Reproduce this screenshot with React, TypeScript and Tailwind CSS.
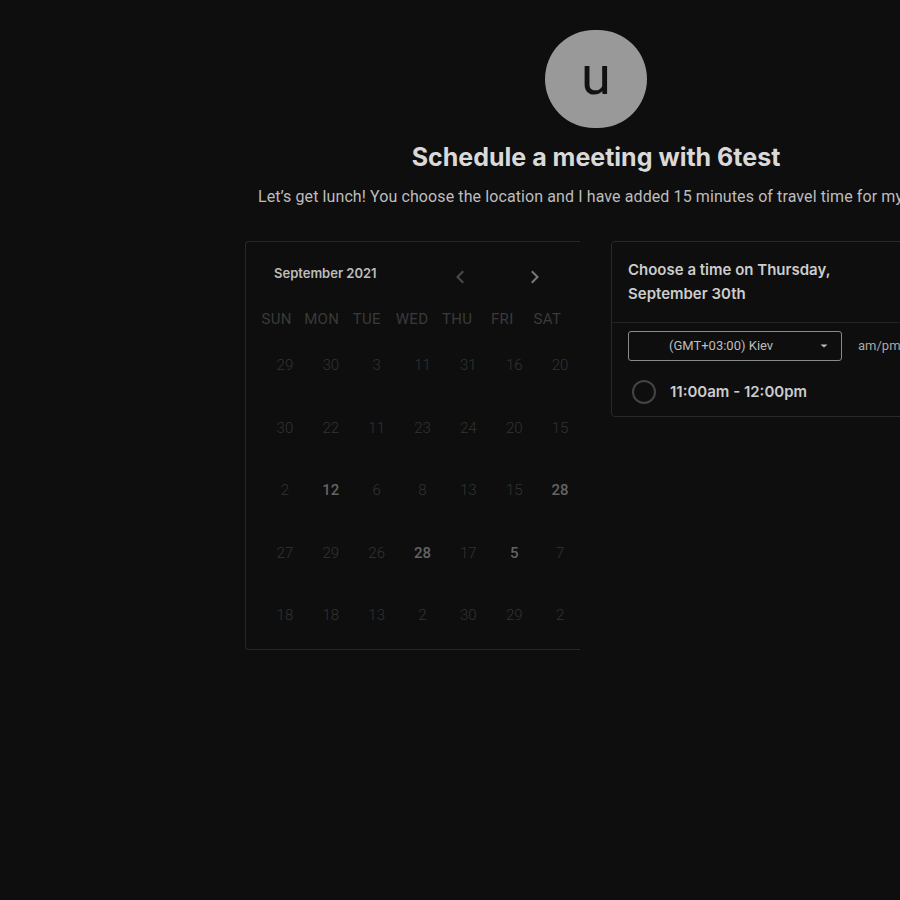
import React from "react";

const weekdays = ["SUN", "MON", "TUE", "WED", "THU", "FRI", "SAT"];
const rows: { v: string; b?: boolean }[][] = [
  [{ v: "29" }, { v: "30" }, { v: "3" }, { v: "11" }, { v: "31" }, { v: "16" }, { v: "20" }],
  [{ v: "30" }, { v: "22" }, { v: "11" }, { v: "23" }, { v: "24" }, { v: "20" }, { v: "15" }],
  [{ v: "2" }, { v: "12", b: true }, { v: "6" }, { v: "8" }, { v: "13" }, { v: "15" }, { v: "28", b: true }],
  [{ v: "27" }, { v: "29" }, { v: "26" }, { v: "28", b: true }, { v: "17" }, { v: "5", b: true }, { v: "7" }],
  [{ v: "18" }, { v: "18" }, { v: "13" }, { v: "2" }, { v: "30" }, { v: "29" }, { v: "2" }],
];

function Chevron({ dir, color }: { dir: "l" | "r"; color: string }) {
  return (
    <svg width="20" height="20" viewBox="0 0 20 20" fill="none">
      <path
        d={dir === "l" ? "M12.5 5 L7.5 10 L12.5 15" : "M7.5 5 L12.5 10 L7.5 15"}
        stroke={color}
        strokeWidth="2"
        strokeLinecap="square"
      />
    </svg>
  );
}

export default function App() {
  return (
    <div className="w-[900px] h-[900px] overflow-hidden bg-[#0e0e0e]">
      <div className="w-[1192px] flex flex-col items-center pt-[30px]">
        <div className="w-[102px] h-[98px] rounded-full bg-[#999999] flex items-center justify-center">
          <span
            className="text-[54px] font-normal text-[#111111] leading-none -mt-[6px]"
            style={{ fontFamily: "Roboto, sans-serif" }}
          >
            u
          </span>
        </div>
        <h1
          className="mt-[14px] text-[25px] leading-[30px] font-bold text-[#d9d9d9]"
          style={{ fontFamily: "Inter, sans-serif" }}
        >
          Schedule a meeting with 6test
        </h1>
        <p
          className="mt-[15px] text-[16px] leading-[20px] tracking-[0.1px] text-[#bdbdbd] whitespace-nowrap"
          style={{ fontFamily: "Roboto, sans-serif" }}
        >
          Let’s get lunch! You choose the location and I have added 15 minutes of travel time for myself.
        </p>

        <div className="mt-[34px] flex gap-[31px] items-start">
          {/* Calendar */}
          <div className="w-[335px] h-[409px] border-l border-t border-b border-[#272727] rounded-l-sm flex">
            <div className="flex-1 flex flex-col">
              <div className="pt-[20px] h-[44px] flex items-center pl-[28px] pr-[38px]">
                <span
                  className="text-[13px] font-semibold text-[#bdbdbd]"
                  style={{ fontFamily: "Inter, sans-serif" }}
                >
                  September 2021
                </span>
                <div className="ml-auto flex items-center gap-[55px] mt-[6px]">
                  <Chevron dir="l" color="#4a4a4a" />
                  <Chevron dir="r" color="#7a7a7a" />
                </div>
              </div>
              <div
                className="mt-[22px] ml-[8px] w-[316px] grid grid-cols-7 h-[20px] items-center"
                style={{ fontFamily: "Roboto, sans-serif" }}
              >
                {weekdays.map((w) => (
                  <div key={w} className="text-center text-[15px] tracking-[0.3px] text-[#3a3a3a]">
                    {w}
                  </div>
                ))}
              </div>
              <div
                className="mt-[6px] ml-[16px] w-[321px] flex flex-col"
                style={{ fontFamily: "Roboto, sans-serif" }}
              >
                {rows.map((r, i) => (
                  <div key={i} className="grid grid-cols-7 h-[62.5px] items-center">
                    {r.map((d, j) => (
                      <div
                        key={j}
                        className={
                          d.b
                            ? "text-center text-[15px] font-medium text-[#636363]"
                            : "text-center text-[15px] font-light text-[#333333]"
                        }
                      >
                        {d.v}
                      </div>
                    ))}
                  </div>
                ))}
              </div>
            </div>
            <div className="w-px flex flex-col">
              <div className="h-[105px] bg-[#272727]" />
              <div className="h-[39px]" />
              <div className="h-[23px] bg-[#272727]" />
              <div className="h-[39px]" />
              <div className="h-[24px] bg-[#272727]" />
              <div className="h-[39px]" />
              <div className="h-[22px] bg-[#272727]" />
              <div className="h-[40px]" />
              <div className="h-[23px] bg-[#272727]" />
              <div className="h-[41px]" />
              <div className="flex-1 bg-[#272727]" />
            </div>
          </div>

          {/* Time panel */}
          <div className="w-[336px] border border-[#292929] rounded-sm">
            <div
              className="px-4 pt-4 pb-4 border-b border-[#232323] text-[15px] leading-[24px] font-semibold text-[#cccccc]"
              style={{ fontFamily: "Inter, sans-serif" }}
            >
              Choose a time on Thursday,
              <br />
              September 30th
            </div>
            <div className="px-4 pt-2 pb-3">
              <div className="flex items-center">
                <div
                  className="w-[214px] h-[30px] border border-[#8a8a8a] rounded-[3px] flex items-center pl-[40px] pr-[12px]"
                  style={{ fontFamily: "Roboto, sans-serif" }}
                >
                  <span className="text-[13px] text-[#bdbdbd]">(GMT+03:00) Kiev</span>
                  <svg className="ml-auto" width="10" height="6" viewBox="0 0 10 6">
                    <path d="M1.5 1.5 L5 4.5 L8.5 1.5 Z" fill="#bdbdbd" />
                  </svg>
                </div>
                <span
                  className="ml-4 text-[13px] text-[#a8a8a8]"
                  style={{ fontFamily: "Roboto, sans-serif" }}
                >
                  am/pm
                </span>
              </div>
              <div className="mt-[19px] flex items-center h-[24px] pl-[4px]">
                <div className="w-[24px] h-[24px] rounded-full border-2 border-[#444444]" />
                <span
                  className="ml-[14px] text-[15px] font-semibold text-[#cccccc]"
                  style={{ fontFamily: "Inter, sans-serif" }}
                >
                  11:00am - 12:00pm
                </span>
              </div>
            </div>
          </div>
        </div>
      </div>
    </div>
  );
}
